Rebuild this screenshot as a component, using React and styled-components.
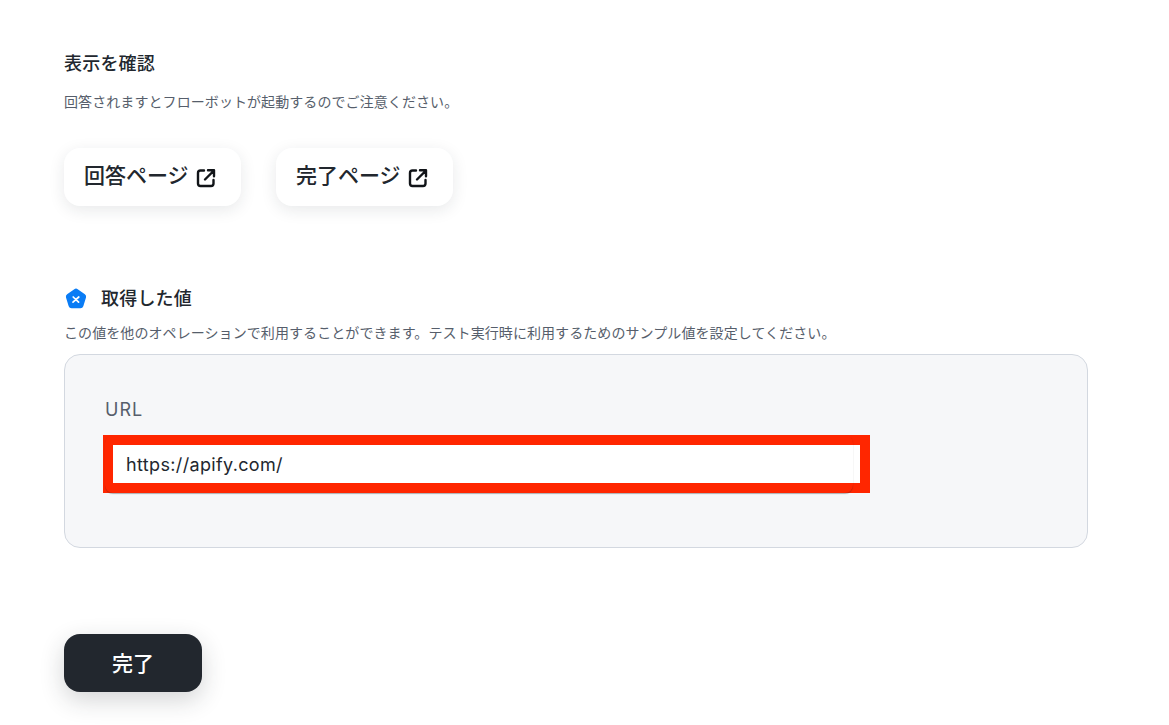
import React from 'react'
import styled, { createGlobalStyle } from 'styled-components'

const GlobalStyle = createGlobalStyle`
  html, body {
    margin: 0;
    padding: 0;
    background: #fff;
    font-family: Inter, "Noto Sans CJK JP", sans-serif;
    color: #22272e;
  }
`

const Page = styled.div`
  width: 1169px;
  height: 725px;
  box-sizing: border-box;
  padding: 53px 81px 0 64px;
  overflow: hidden;
`

const Heading = styled.h2`
  margin: 0;
  font-size: 18px;
  line-height: 22px;
  letter-spacing: 0.2px;
  font-weight: 500;
  color: #22272e;
`

const Note = styled.p`
  margin: ${(p) => p.$top}px 0 0;
  font-size: 14px;
  line-height: 18px;
  letter-spacing: 0.08px;
  color: #565e6b;
`

const LinkRow = styled.div`
  display: flex;
  gap: 35px;
  margin-top: 37px;
`

const LinkButton = styled.a`
  width: 177px;
  height: 58px;
  box-sizing: border-box;
  display: flex;
  align-items: center;
  gap: 6px;
  padding: 0 0 6px 20px;
  border-radius: 16px;
  background: #fff;
  box-shadow: 0 4px 16px rgba(34, 39, 46, 0.1);
  font-size: 21px;
  font-weight: 500;
  color: #22272e;

  svg {
    margin-top: 8px;
  }
`

const SectionTitle = styled.div`
  display: flex;
  align-items: center;
  gap: 13px;
  margin-top: 81px;
`

const Panel = styled.div`
  height: 194px;
  box-sizing: border-box;
  margin-top: 12px;
  padding: 44px 40px 0;
  border: 1px solid #d3d8e0;
  border-radius: 16px;
  background: #f6f7f9;
`

const FieldLabel = styled.div`
  font-size: 18px;
  line-height: 22px;
  letter-spacing: 1px;
  color: #565e6b;
`

const FieldWrap = styled.div`
  position: relative;
  width: 748px;
  margin-top: 14px;
`

const UrlInput = styled.div`
  position: relative;
  height: 58px;
  box-sizing: border-box;
  display: flex;
  align-items: center;
  padding: 0 21px;
  border-radius: 8px;
  box-shadow: 0 1px 1px rgba(34, 39, 46, 0.35);
  font-size: 18px;
  letter-spacing: 0.35px;
  color: #22272e;
`

const RedMark = styled.div`
  position: absolute;
  left: -2px;
  top: 0;
  width: 767px;
  height: 58px;
  box-sizing: border-box;
  border: 10px solid #ff2600;
  background: #fff;
`

const DoneButton = styled.button`
  display: block;
  width: 138px;
  height: 58px;
  margin-top: 86px;
  padding: 0 0 2px;
  border: none;
  border-radius: 16px;
  background: #22272e;
  box-shadow: 0 8px 24px rgba(34, 39, 46, 0.2);
  font-family: inherit;
  font-size: 21px;
  font-weight: 500;
  color: #fff;
`

const OpenIcon = () => (
  <svg width="22" height="22" viewBox="0 0 22 22" fill="none" stroke="#111418" strokeWidth="2.4" strokeLinecap="round" strokeLinejoin="round">
    <path d="M9 3.5H5.5a2.5 2.5 0 0 0-2.5 2.5v10.5A2.5 2.5 0 0 0 5.5 19H16a2.5 2.5 0 0 0 2.5-2.5V13" />
    <path d="M10 12.5L18.5 4M13 3.2h6v6" />
  </svg>
)

const ValueIcon = () => (
  <svg width="24" height="24" viewBox="0 0 24 24">
    <path d="M10.3 2.2a3 3 0 0 1 3.4 0l7.2 5.1a3 3 0 0 1 1.1 3.3l-2.7 8.6a3 3 0 0 1-2.9 2.1H7.6a3 3 0 0 1-2.9-2.1L2 10.6a3 3 0 0 1 1.1-3.3z" fill="#0a7cf5" />
    <path d="M9.2 10l5.4 5.2M14.8 10L9 15.2" stroke="#fff" strokeWidth="1.7" strokeLinecap="round" fill="none" />
  </svg>
)

export default function App() {
  return (
    <Page>
      <GlobalStyle />
      <Heading>表示を確認</Heading>
      <Note $top={18}>回答されますとフローボットが起動するのでご注意ください。</Note>
      <LinkRow>
        <LinkButton>回答ページ<OpenIcon /></LinkButton>
        <LinkButton>完了ページ<OpenIcon /></LinkButton>
      </LinkRow>
      <SectionTitle>
        <ValueIcon />
        <Heading>取得した値</Heading>
      </SectionTitle>
      <Note $top={13}>この値を他のオペレーションで利用することができます。テスト実行時に利用するためのサンプル値を設定してください。</Note>
      <Panel>
        <FieldLabel>URL</FieldLabel>
        <FieldWrap>
          <RedMark />
          <UrlInput>https://apify.com/</UrlInput>
        </FieldWrap>
      </Panel>
      <DoneButton>完了</DoneButton>
    </Page>
  )
}
